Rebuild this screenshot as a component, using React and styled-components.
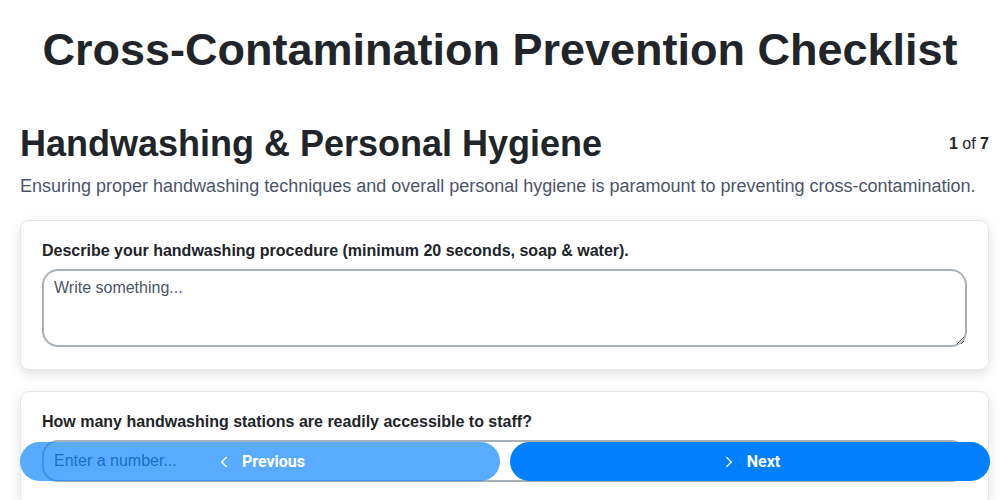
import React from "react";
import styled, { createGlobalStyle } from "styled-components";
import { ChevronLeft, ChevronRight } from "lucide-react";

const GlobalStyle = createGlobalStyle`
  html, body {
    margin: 0;
    padding: 0;
    background: #ffffff;
    font-family: "Liberation Sans", Arial, sans-serif;
    color: #212529;
  }
  * { box-sizing: border-box; }
`;

const Page = styled.div`
  padding: 0 11px 80px 20px;
`;

const Title = styled.h1`
  font-family: "Liberation Sans", Arial, sans-serif;
  font-size: 45px;
  font-weight: 700;
  text-align: center;
  white-space: nowrap;
  margin: 0;
  padding: 22px 0 18px;
  line-height: 56px;
  color: #212529;
`;

const SectionHeader = styled.div`
  display: flex;
  align-items: center;
  justify-content: space-between;
  margin-top: 26px;
`;

const SectionTitle = styled.h2`
  font-size: 36px;
  font-weight: 700;
  margin: 0;
  line-height: 44px;
  color: #212529;
`;

const Counter = styled.div`
  font-size: 16px;
  color: #212529;
  b { font-weight: 700; }
`;

const Description = styled.p`
  font-size: 18px;
  color: #4a5568;
  margin: 8px 0 22px;
  line-height: 24px;
  white-space: nowrap;
`;

const Card = styled.div`
  background: #fff;
  border: 1px solid #e5e7eb;
  border-radius: 9px;
  padding: 20px 21px 22px;
  margin-bottom: 21px;
  box-shadow: 0 4px 12px rgba(0, 0, 0, 0.12);
`;

const Label = styled.label`
  display: block;
  font-size: 16px;
  font-weight: 700;
  color: #212529;
  margin-bottom: 9px;
  line-height: 19px;
`;

const fieldStyles = `
  width: 100%;
  border: 2px solid #a8b0b8;
  border-radius: 16px;
  padding: 8px 10px;
  font-family: "Liberation Sans", Arial, sans-serif;
  font-size: 16px;
  color: #212529;
  background: #fff;
  outline: none;
  &::placeholder { color: #4a5568; opacity: 1; }
`;

const TextArea = styled.textarea`
  ${fieldStyles}
  display: block;
  height: 78px;
  resize: vertical;
`;

const NumberInput = styled.input`
  ${fieldStyles}
  height: 42px;
`;

const Nav = styled.div`
  position: fixed;
  left: 20px;
  right: 10px;
  bottom: 19px;
  display: grid;
  grid-template-columns: 1fr 1fr;
  gap: 10px;
`;

const NavButton = styled.button`
  height: 39px;
  border: none;
  border-radius: 20px;
  background: #007fff;
  color: #fff;
  font-family: Roboto, "Liberation Sans", sans-serif;
  font-weight: 700;
  font-size: 16px;
  display: flex;
  align-items: center;
  justify-content: center;
  gap: 9px;
  opacity: ${(p) => (p.disabled ? 0.65 : 1)};
  cursor: pointer;
`;

export default function App() {
  return (
    <>
      <GlobalStyle />
      <Title>Cross-Contamination Prevention Checklist</Title>
      <Page>
        <SectionHeader>
          <SectionTitle>Handwashing &amp; Personal Hygiene</SectionTitle>
          <Counter>
            <b>1</b> of <b>7</b>
          </Counter>
        </SectionHeader>
        <Description>
          Ensuring proper handwashing techniques and overall personal hygiene is
          paramount to preventing cross-contamination.
        </Description>
        <Card>
          <Label>
            Describe your handwashing procedure (minimum 20 seconds, soap &amp;
            water).
          </Label>
          <TextArea placeholder="Write something..." />
        </Card>
        <Card>
          <Label>How many handwashing stations are readily accessible to staff?</Label>
          <NumberInput type="number" placeholder="Enter a number..." />
        </Card>
      </Page>
      <Nav>
        <NavButton disabled>
          <ChevronLeft size={18} strokeWidth={2} />
          Previous
        </NavButton>
        <NavButton>
          <ChevronRight size={18} strokeWidth={2} />
          Next
        </NavButton>
      </Nav>
    </>
  );
}
